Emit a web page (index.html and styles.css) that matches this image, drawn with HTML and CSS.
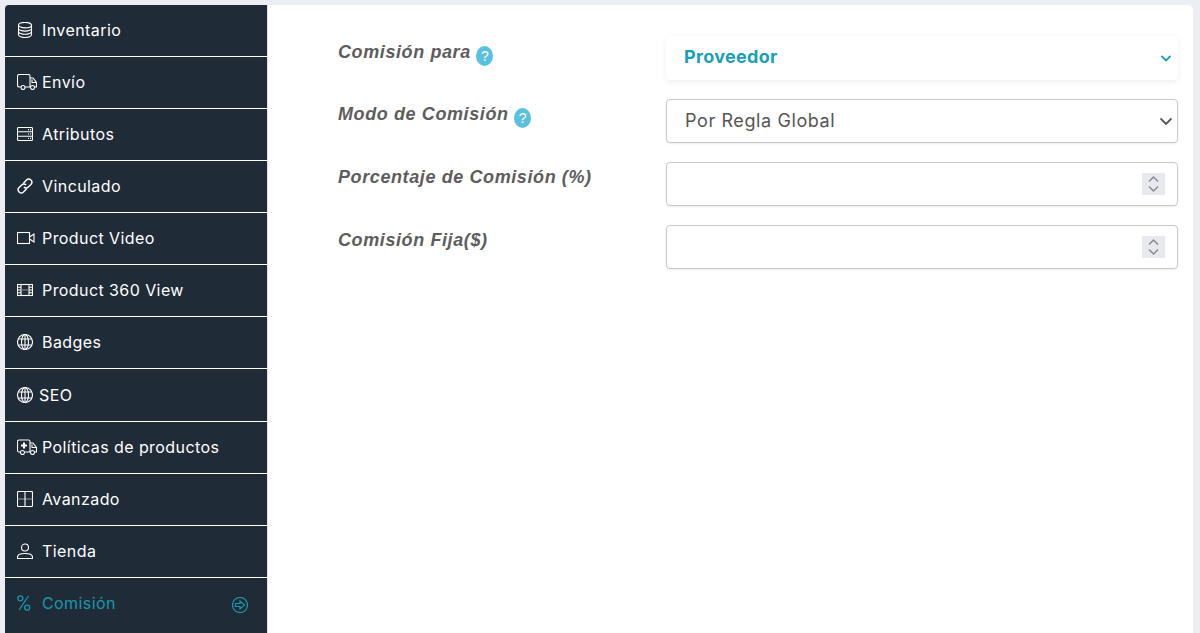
FILE: index.html
```html
<!DOCTYPE html>
<html lang="es">
<head>
    <meta charset="UTF-8">
    <meta name="viewport" content="width=device-width, initial-scale=1.0">
    <title>Comisión</title>
    <link rel="stylesheet" href="styles.css">
</head>
<body>
    <div class="panel">
        <ul class="tabs">
            <li class="tab">
                <svg class="icon" width="16" height="16" viewBox="0 0 16 16"><ellipse cx="8" cy="3.200" rx="6.500" ry="2.700"/><path d="M1.500 3.200v9.600c0 1.400 2.900 2.700 6.500 2.700s6.500-1.300 6.500-2.700V3.200M1.500 6.400c0 1.400 2.900 2.700 6.500 2.700s6.500-1.300 6.500-2.700M1.500 9.600c0 1.400 2.900 2.700 6.500 2.700s6.500-1.300 6.500-2.700"/></svg>
                <span class="tab-text">Inventario</span>
            </li>
            <li class="tab">
                <svg class="icon icon-wide" width="20" height="16" viewBox="0 0 20 16"><path d="M4 13H2.200C1.300 13 .5 12.200 .5 11.300V2.200C.5 1.300 1.300 .5 2.200 .5h9.300c.9 0 1.500 .8 1.500 1.700V13H8M13 4h3l3.500 4.500V13h-2M15 5.500v3h4"/><circle cx="6" cy="13.500" r="2"/><circle cx="15.500" cy="13.500" r="2"/></svg>
                <span class="tab-text">Envío</span>
            </li>
            <li class="tab">
                <svg class="icon" width="16" height="16" viewBox="0 0 16 16"><rect x=".5" y="1.500" width="15" height="13" rx="1"/><path d="M.5 5.800h15M.5 10.200h15M11 3.600h1M13 3.600h1M11 8h1M13 8h1M11 12.400h1M13 12.400h1"/></svg>
                <span class="tab-text">Atributos</span>
            </li>
            <li class="tab">
                <svg class="icon icon-strong" width="16" height="16" viewBox="0 0 16 16"><path d="M6.400 5.200 9.500 2.100a3 3 0 0 1 4.400 4.400l-2.600 2.600a3 3 0 0 1-4.400 0"/><path d="M9.600 10.800 6.500 13.900a3 3 0 0 1-4.400-4.400l2.600-2.600a3 3 0 0 1 4.400 0"/></svg>
                <span class="tab-text">Vinculado</span>
            </li>
            <li class="tab">
                <svg class="icon icon-video" width="18" height="16" viewBox="0 0 18 16"><rect x=".5" y="2.500" width="12" height="11"/><path d="M12.500 7l4.500-3v8l-4.500-3"/></svg>
                <span class="tab-text">Product Video</span>
            </li>
            <li class="tab">
                <svg class="icon" width="16" height="16" viewBox="0 0 16 16"><rect x=".5" y="2.500" width="15" height="11"/><path d="M4 2.500v11M12 2.500v11M.5 5.200H4M.5 8H4M.5 10.800H4M12 5.200h3.500M12 8h3.500M12 10.800h3.500"/><path class="dim" d="M4 8h8"/></svg>
                <span class="tab-text">Product 360 View</span>
            </li>
            <li class="tab">
                <svg class="icon" width="16" height="16" viewBox="0 0 16 16"><circle cx="8" cy="8" r="7.500"/><ellipse cx="8" cy="8" rx="3.500" ry="7.500"/><path d="M8 .5v15M1.200 5h13.600M1.200 11h13.600"/></svg>
                <span class="tab-text">Badges</span>
            </li>
            <li class="tab tab-tall">
                <svg class="icon" width="16" height="16" viewBox="0 0 16 16"><circle cx="8" cy="8" r="7.500"/><ellipse cx="8" cy="8" rx="3.500" ry="7.500"/><path d="M8 .5v15M1.200 5h13.600M1.200 11h13.600"/></svg>
                <span class="tab-text tab-text-tight">SEO</span>
            </li>
            <li class="tab">
                <svg class="icon icon-wide" width="20" height="16" viewBox="0 0 20 16"><path d="M3 13H2C1.200 13 .5 12.300 .5 11.500V2.500C.5 1.600 1.200 1 2 1h9.500c.9 0 1.500 .6 1.500 1.500V13H8M13 4h3l3.500 4.500V13h-2M15 5.500v3h4"/><circle cx="5.500" cy="13.500" r="2"/><circle cx="15.500" cy="13.500" r="2"/><path class="thick" d="M7 3.500v6M4 6.500h6"/></svg>
                <span class="tab-text">Políticas de productos</span>
            </li>
            <li class="tab">
                <svg class="icon" width="16" height="16" viewBox="0 0 16 16"><rect x=".5" y=".5" width="15" height="15" rx="1"/><path class="dim" d="M.5 8h15"/><path d="M8 .5v15"/></svg>
                <span class="tab-text">Avanzado</span>
            </li>
            <li class="tab">
                <svg class="icon" width="16" height="16" viewBox="0 0 16 16"><circle cx="8" cy="4.500" r="3.500"/><path d="M.5 15.500v-1.500C.5 11.500 3 10.500 8 10.500s7.500 1 7.500 3.500v1.500z"/></svg>
                <span class="tab-text">Tienda</span>
            </li>
            <li class="tab tab-active">
                <svg class="icon icon-percent" width="16" height="16" viewBox="0 0 16 16"><circle cx="3.300" cy="3.300" r="2.500"/><circle cx="10.200" cy="12.700" r="2.500"/><path d="M11.500 1 2 15"/></svg>
                <span class="tab-text">Comisión</span>
                <svg class="tab-arrow" width="16" height="16" viewBox="0 0 16 16"><circle cx="8" cy="8" r="7.500"/><path d="M3.500 6.500H8V4l4.500 4L8 12V9.500H3.500z"/></svg>
            </li>
        </ul>
        <div class="content">
            <div class="form-row">
                <div class="form-label">Comisión para <span class="help">?</span></div>
                <div class="control control-select control-plain">
                    <span class="control-value">Proveedor</span>
                    <svg width="12" height="12" viewBox="0 0 12 12"><path d="M1.500 4 6 8.500 10.500 4"/></svg>
                </div>
            </div>
            <div class="form-row">
                <div class="form-label">Modo de Comisión <span class="help">?</span></div>
                <div class="control control-select">
                    <span>Por Regla Global</span>
                    <svg width="12" height="12" viewBox="0 0 12 12"><path d="M.5 3.500 6 9l5.500-5.500"/></svg>
                </div>
            </div>
            <div class="form-row">
                <div class="form-label">Porcentaje de Comisión (%)</div>
                <div class="control">
                    <span></span>
                    <span class="spinner"><svg width="13" height="20" viewBox="0 0 13 20"><path d="M2 7.500l4.500-4.500 4.500 4.500M2 12.500l4.500 4.500 4.500-4.500"/></svg></span>
                </div>
            </div>
            <div class="form-row">
                <div class="form-label">Comisión Fija($)</div>
                <div class="control">
                    <span></span>
                    <span class="spinner"><svg width="13" height="20" viewBox="0 0 13 20"><path d="M2 7.500l4.500-4.500 4.500 4.500M2 12.500l4.500 4.500 4.500-4.500"/></svg></span>
                </div>
            </div>
        </div>
    </div>
</body>
</html>
```

FILE: styles.css
```css
html, body { height: 100%; }
body { margin: 0; background: #eceef3; font-family: Inter, "Open Sans", sans-serif; overflow: hidden; }
.panel { display: flex; height: 633px; padding: 5px 7px 0 5px; box-sizing: border-box; }

.tabs { width: 262px; flex: none; margin: 0; padding: 0; list-style: none; background: #1f2b37; border-top-left-radius: 4px; border-right: 1px solid #dfe1e6; }
.tab { display: flex; align-items: center; height: 50px; padding: 0 0 1px 12px; border-bottom: 1px solid #fff; color: #fff; font-size: 16px; letter-spacing: .42px; }
.tab-tall { height: 51px; }
.tab-active { border-bottom: 0; color: #1b97ab; }
.tab-text { margin-left: 9px; }
.tab-text-tight { margin-left: 6px; }
.icon { flex: none; fill: none; stroke: currentColor; stroke-width: 1.100; }
.icon-strong { stroke-width: 1.400; }
.icon-wide { margin-right: -4px; }
.icon-video { margin-right: -2px; }
.icon-percent { stroke-width: 1.300; }
.icon .dim { stroke: #8a929a; }
.icon .thick { stroke-width: 2; }
.tab-arrow { margin-left: auto; margin-right: 19px; margin-top: 3px; fill: none; stroke: currentColor; stroke-width: 1.200; }

.content { flex: 1; background: #fff; border-top-right-radius: 5px; padding: 31px 15px 0 70px; }
.form-row { display: flex; margin-bottom: 19px; }
.form-label { width: 328px; flex: none; padding-top: 4px; color: #5d5d5d; font: italic bold 18px "Liberation Sans", sans-serif; letter-spacing: .6px; line-height: 22px; }
.form-row:first-child .form-label { padding-top: 5px; }
.help { display: inline-block; width: 17px; height: 20px; border-radius: 50%; background: #5bbfdf; color: #fff; font: normal 14px/20px "Liberation Sans", sans-serif; text-align: center; letter-spacing: 0; vertical-align: -3px; }
.control { flex: 1; display: flex; align-items: center; justify-content: space-between; height: 44px; box-sizing: border-box; padding: 0 12px 0 18px; background: #fff; border: 1px solid #c9c9c9; border-radius: 4px; box-shadow: 0 1px 2px rgba(0, 0, 0, .08); color: #555; font-size: 18px; letter-spacing: .6px; }
.control svg { fill: none; stroke: currentColor; stroke-width: 1.800; flex: none; }
.control-select { padding-right: 5px; padding-bottom: 2px; }
.control-select svg { margin-top: 2px; }
.control-plain { border-color: transparent; color: #1b9fb8; box-shadow: 0 2px 6px rgba(0, 0, 0, .07); padding-left: 17px; padding-bottom: 4px; }
.control-plain svg { margin-top: 4px; }
.control-value { font-weight: 700; letter-spacing: .3px; }
.spinner { display: flex; align-items: center; justify-content: center; width: 23px; height: 22px; background: #e8e8ef; color: #8a8a98; }
.control .spinner svg { stroke-width: 1.500; }
```
